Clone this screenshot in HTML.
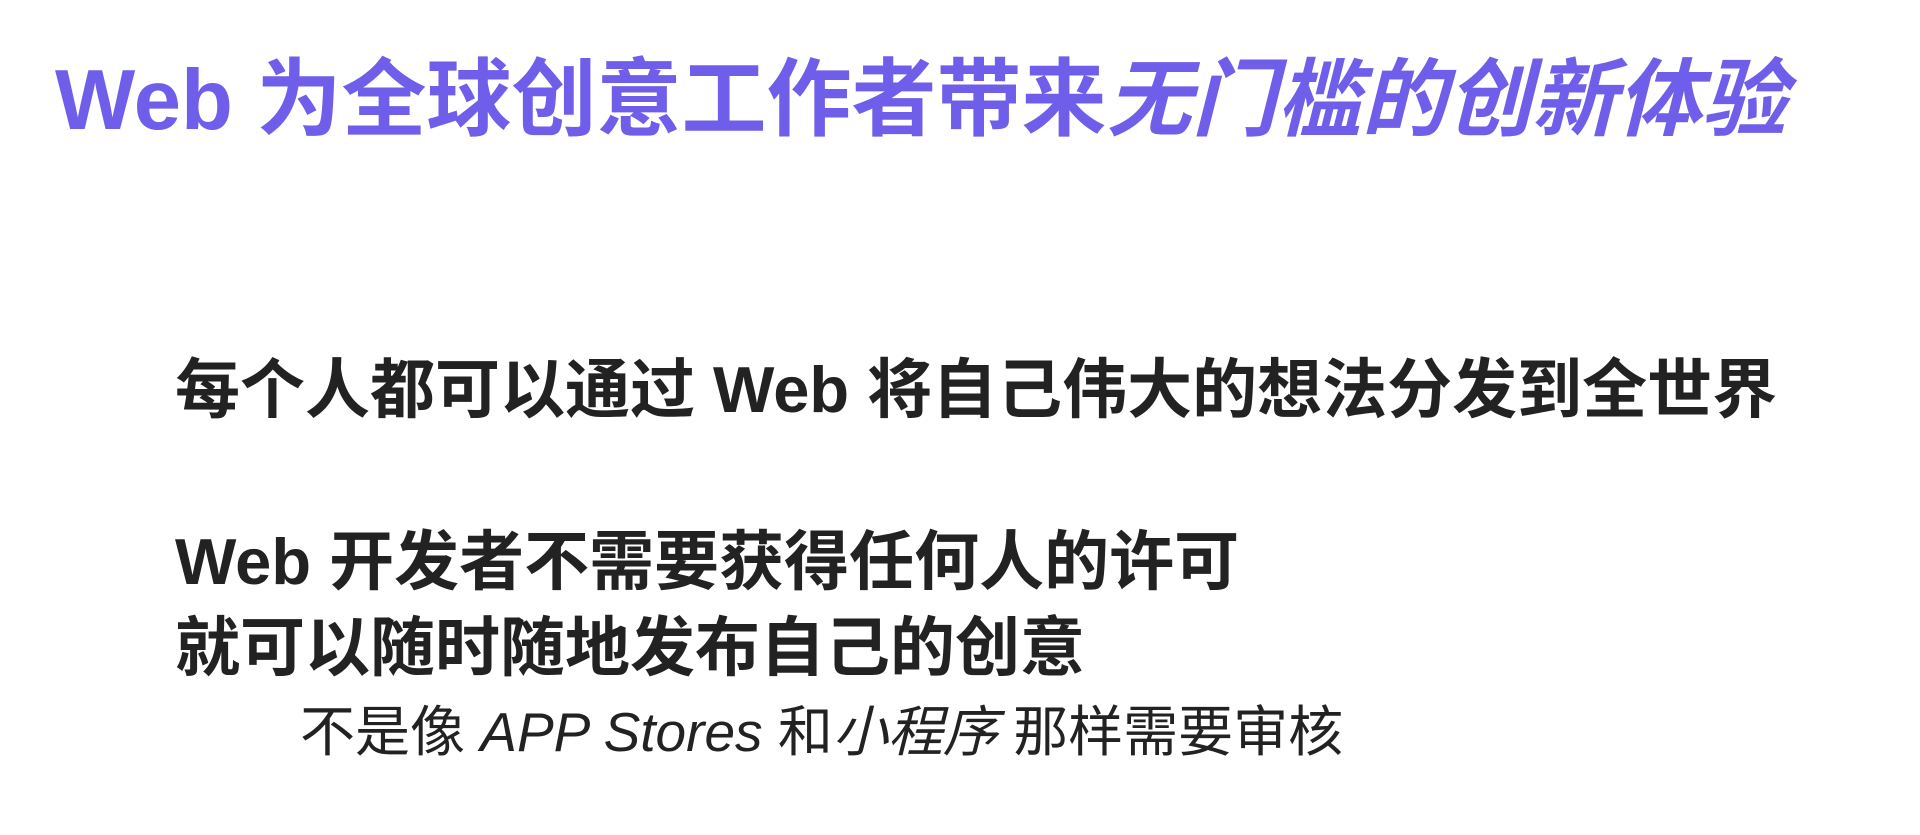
<!DOCTYPE html>
<html><head><meta charset="utf-8"><style>
html,body{margin:0;padding:0;background:#fff;width:1920px;height:835px;overflow:hidden}
div{position:absolute;white-space:nowrap;font-family:"Liberation Sans","Noto Sans CJK SC",sans-serif}
.t{left:55px;top:58px;font-size:85px;line-height:85px;font-weight:bold;color:#6f5ee9}
.b{left:175px;font-size:65px;line-height:65px;font-weight:bold;color:#222}
.s{left:300px;top:705px;font-size:55px;line-height:55px;color:#222}
</style></head><body>
<div class="t">Web 为全球创意工作者带来<i>无门槛的创新体验</i></div>
<div class="b" style="top:357px">每个人都可以通过 Web 将自己伟大的想法分发到全世界</div>
<div class="b" style="top:529px">Web 开发者不需要获得任何人的许可</div>
<div class="b" style="top:615px">就可以随时随地发布自己的创意</div>
<div class="s">不是像 <i>APP Stores</i> 和<i>小程序</i> 那样需要审核</div>
</body></html>
